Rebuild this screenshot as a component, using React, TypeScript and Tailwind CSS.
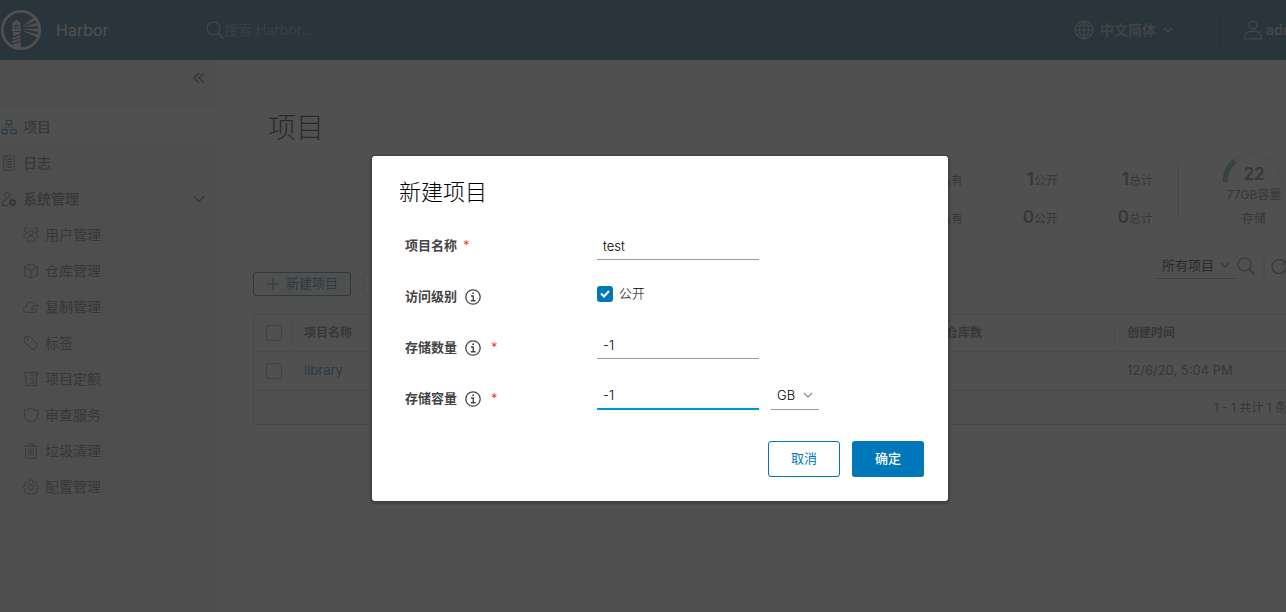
import type { ReactNode } from 'react';

const FONT = "font-['Inter','Noto_Sans_CJK_SC',sans-serif]";

function Icon({ children, className = 'size-4', box = 36, stroke = 2 }: { children: ReactNode; className?: string; box?: number; stroke?: number }) {
  return (
    <svg
      className={`shrink-0 ${className}`}
      viewBox={`0 0 ${box} ${box}`}
      fill="none"
      stroke="currentColor"
      strokeWidth={stroke}
      strokeLinejoin="round"
      aria-hidden="true"
    >
      {children}
    </svg>
  );
}

const Chevron = ({ className }: { className: string }) => (
  <Icon className={className} box={12} stroke={1.2}>
    <path d="M2 4l4 4 4-4" />
  </Icon>
);

const Magnifier = ({ className }: { className: string }) => (
  <Icon className={className} box={18} stroke={1.1}>
    <circle cx="7.5" cy="7.5" r="6.5" />
    <path d="M12.2 12.2l5 5" strokeWidth="1.5" />
  </Icon>
);

function HarborLogo() {
  return (
    <svg className="size-[42px] shrink-0" viewBox="0 0 42 42" fill="currentColor" aria-hidden="true">
      <circle cx="21" cy="21" r="18.7" fill="none" stroke="currentColor" strokeWidth="2.7" />
      <path d="M16.5 10.5l4 3.5v2h-8v-2z" />
      <path d="M12.6 16h2v5h-2zM18.4 16h2v5h-2zM15.6 17h2v3h-2zM11.8 20.6h9.4v1.6h-9.4z" />
      <path d="M13 23h7l.2 2-7.4 2.200zM12.700 28.500l7.600-2.300.1 2-7.800 2.500zM12.500 32l8-2.500.1 2-8.200 2.700zM12.300 35.500l8.400-2.700.2 6.700h-4z" />
      <path d="M22 17.500L34.500 8l2 3zM22 18.600l15.500-5 1 3.400zM22 20l17-.5v3.400zM22 21.500l16.500 4-1.500 3z" />
    </svg>
  );
}

const icons: Record<string, ReactNode> = {
  projects: (
    <>
      <path d="M12 3h12v9H12zM2 24h12v9H2zM22 24h12v9H22z" strokeWidth="2.5" />
      <path d="M18 13v4M8 22v-4h20v4" strokeWidth="1.500" />
    </>
  ),
  logs: (
    <>
      <path d="M6 2h24v32H6z" />
      <path d="M11 9h2M15 9h10M11 15h2M15 15h10M11 21h2M15 21h10M11 27h2M15 27h10" strokeWidth="3" />
    </>
  ),
  admin: (
    <>
      <circle cx="14" cy="9" r="6" />
      <path d="M16 33H3v-7c3-5 7-7 12-7" strokeWidth="2.5" />
      <circle cx="26" cy="26" r="5" strokeWidth="4" />
      <path d="M26 17v4M26 31v4M17 26h4M31 26h4M20 20l3 3M29 29l3 3M32 20l-3 3M23 29l-3 3" strokeWidth="3" />
    </>
  ),
  users: (
    <>
      <circle cx="18" cy="13" r="5" />
      <path d="M9 32v-6c2-4 5-6 9-6s7 2 9 6v6z" />
      <path d="M11 11a5 5 0 1 1 1-7M25 11a5 5 0 1 0-1-7M6 24H2v-5c1-3 4-5 7-5M30 24h4v-5c-1-3-4-5-7-5" />
    </>
  ),
  registry: (
    <>
      <path d="M18 2l15 7v18l-15 7-15-7V9z" />
      <path d="M3 9l15 8 15-8M18 17v17" />
    </>
  ),
  replication: (
    <>
      <path d="M31 24c0 4-2 6-6 6H9c-5 0-8-3-8-7s3-6 6-6c0-6 4-10 10-10 3 0 6 1 8 4" />
      <path d="M22 15h12M30 11l4 4-4 4M31 22H19M23 18l-4 4 4 4" />
    </>
  ),
  tag: (
    <>
      <path d="M3 4h13l18 18-11 12L3 16z" />
      <circle cx="10" cy="10" r="1.500" />
    </>
  ),
  quota: (
    <>
      <path d="M2 3h32v7M2 3l5 6v24h23V3" />
      <path d="M17 9h9M21 14h5M17 19h9M21 24h5M17 28h9" />
    </>
  ),
  shield: <path d="M18 2c5 4 10 5 15 5v11c0 8-6 13-15 16C9 31 3 26 3 18V7c5 0 10-1 15-5z" />,
  trash: <path d="M2 7h32M6 11v23h24V11M13 13v16M18 13v16M23 13v16M13 6V2h10v4" />,
  cog: (
    <>
      <path d="M15 2h6l1 5 3 1 4-3 4 4-3 4 1 3 5 1v4l-5 2-1 3 3 4-4 4-4-3-3 1-1 4h-6l-1-4-3-1-4 3-4-4 3-4-1-3-4-2v-4l4-1 1-3-3-4 4-4 4 3 3-1z" />
      <circle cx="18" cy="18" r="6" />
    </>
  ),
};

const subItems = [
  ['users', '用户管理'],
  ['registry', '仓库管理'],
  ['replication', '复制管理'],
  ['tag', '标签'],
  ['quota', '项目定额'],
  ['shield', '审查服务'],
  ['trash', '垃圾清理'],
  ['cog', '配置管理'],
];

function Header() {
  return (
    <header className="flex h-[60px] shrink-0 items-center bg-[#004a70] text-[#fafafa]">
      <a href="#" className="flex w-[181px] items-center gap-[14px]">
        <HarborLogo />
        <span className="text-base">Harbor</span>
      </a>
      <div className="h-10 w-px bg-white/10" />
      <label className="flex flex-1 items-center pl-6 opacity-65">
        <Magnifier className="size-[18px]" />
        <input type="search" aria-label="搜索" placeholder="搜索 Harbor..." className="w-48 bg-transparent text-sm outline-none placeholder:text-[#fafafa]/60" />
      </label>
      <button className="flex items-center gap-[6px] pr-[42px] text-sm font-medium opacity-65">
        <Icon className="size-5" stroke={2}>
          <circle cx="18" cy="18" r="16" />
          <path d="M18 2v32M2 18h32M5 10h26M5 26h26M18 2c-11 9-11 23 0 32M18 2c11 9 11 23 0 32" />
        </Icon>
        中文简体
        <Chevron className="size-3" />
      </button>
      <div className="h-10 w-px bg-white/10" />
      <button className="flex w-[103px] items-center gap-[3px] overflow-hidden pl-[26px] text-sm font-semibold opacity-65">
        <Icon className="size-5">
          <circle cx="18" cy="9" r="7" />
          <path d="M3 34v-7c4-5 9-7 15-7s11 2 15 7v7z" />
        </Icon>
        admin
      </button>
    </header>
  );
}

function Sidebar() {
  return (
    <nav className="w-[217px] shrink-0 bg-[#eeeeee] text-sm text-[#565656]">
      <div className="flex h-[37px] items-center justify-end border-b border-[#dcdcdc] pr-3">
        <button aria-label="收起">
          <Icon className="size-3" box={12} stroke={1.4}>
            <path d="M6 1L1 6l5 5M11 1L6 6l5 5" />
          </Icon>
        </button>
      </div>
      <ul className="pt-3">
        <li>
          <a href="#" className="flex h-9 items-center gap-[6px] bg-[#fafafa] pl-px font-medium">
            <Icon className="size-4 text-[#0072a3]">{icons.projects}</Icon>
            项目
          </a>
        </li>
        <li>
          <a href="#" className="flex h-9 items-center gap-[6px] pl-px font-medium">
            <Icon>{icons.logs}</Icon>
            日志
          </a>
        </li>
        <li>
          <button className="flex h-9 w-full items-center gap-[6px] pr-3 pl-px font-medium">
            <Icon>{icons.admin}</Icon>
            系统管理
            <Chevron className="ml-auto size-3 scale-125" />
          </button>
          <ul>
            {subItems.map(([icon, label]) => (
              <li key={label}>
                <a href="#" className="flex h-9 items-center gap-[6px] pl-[23px] font-normal">
                  <Icon>{icons[icon]}</Icon>
                  {label}
                </a>
              </li>
            ))}
          </ul>
        </li>
      </ul>
    </nav>
  );
}

function Stat({ value, label }: { value: number; label: string }) {
  return (
    <div className="flex w-[95px] items-baseline justify-end">
      <span className="text-[17px] leading-5 font-semibold">{value}</span>
      <span className="text-xs font-normal">{label}</span>
    </div>
  );
}

function Statistics() {
  return (
    <div className="flex h-[84px] justify-end pr-9 text-[#565656]">
      <div className="flex flex-col gap-[18px] pt-[14px]">
        <div className="flex">
          <Stat value={0} label="私有" />
          <Stat value={1} label="公开" />
          <Stat value={1} label="总计" />
        </div>
        <div className="flex">
          <Stat value={0} label="私有" />
          <Stat value={0} label="公开" />
          <Stat value={0} label="总计" />
        </div>
      </div>
      <div className="mt-2 mr-[45px] ml-6 h-[53px] w-[2px] bg-[#dddddd]" />
      <div className="relative flex w-[60px] flex-col items-center pt-[9px] text-xs font-normal whitespace-nowrap">
        <svg className="absolute -top-1 -left-[3px] w-16" viewBox="0 0 64 32" fill="none" strokeWidth="5" aria-hidden="true">
          <path d="M4 31a28 28 0 0 1 56 0" stroke="#f2f2f2" />
          <path d="M4 31a28 28 0 0 1 9.500-21" stroke="#5aa66e" />
        </svg>
        <span className="text-[17px] leading-5 font-semibold">22</span>
        <span className="leading-[22px]">77GB容量</span>
        <span className="leading-[26px]">存储</span>
      </div>
    </div>
  );
}

function Toolbar() {
  return (
    <div className="flex h-11 justify-between">
      <div className="flex items-end gap-3 text-[13px]">
        <button className="flex h-6 items-center gap-[6px] rounded-[3px] border border-[#0072a3] px-3 text-[#0072a3]">
          <Icon className="size-[14px]" box={14} stroke={1}>
            <path d="M7 1v12M1 7h12" />
          </Icon>
          新建项目
        </button>
        <button disabled className="h-6 rounded-[3px] border border-[#cccccc] px-3 text-[#cccccc]">
          删除
        </button>
      </div>
      <div className="flex items-start text-[#565656]">
        <div className="relative border-b border-[#9a9a9a]">
          <select aria-label="项目筛选" className="h-6 w-20 appearance-none bg-transparent pl-[6px] text-[13px] text-black outline-none">
            <option>所有项目</option>
          </select>
          <Chevron className="pointer-events-none absolute top-[7px] right-[5px] size-3" />
        </div>
        <button aria-label="搜索" className="mt-[5px] ml-px">
          <Magnifier className="size-[18px]" />
        </button>
        <div className="mt-1 ml-2 h-[23px] w-[2px] bg-[#dddddd]" />
        <button aria-label="刷新" className="mt-[6px] mr-[33px] ml-[6px]">
          <Icon className="size-4" box={16} stroke={1.2}>
            <path d="M14 5a7 7 0 1 0 1 4" />
            <path d="M15 1v5h-5" />
          </Icon>
        </button>
      </div>
    </div>
  );
}

function ProjectTable() {
  const box = 'block size-4 appearance-none rounded-[3px] border border-[#9a9a9a]';
  return (
    <div className="mt-[18px] rounded-[3px] border border-[#cccccc] text-[13px] text-[#565656]">
      <table className="w-full table-fixed text-left">
        <colgroup>
          <col className="w-[38px]" />
          <col />
          <col className="w-[180px]" />
          <col className="w-[205px]" />
        </colgroup>
        <thead className="text-xs">
          <tr className="h-9">
            <th className="pl-3">
              <input type="checkbox" aria-label="全选" className={box} />
            </th>
            <th className="font-semibold">
              <div className="flex h-6 items-center border-l border-[#dddddd] pl-[11px]">项目名称</div>
            </th>
            <th className="font-semibold">
              <div className="flex h-6 items-center pl-3">仓库数</div>
            </th>
            <th className="font-semibold">
              <div className="flex h-6 items-center border-l border-[#dddddd] pl-3">创建时间</div>
            </th>
          </tr>
        </thead>
        <tbody>
          <tr className="h-[39px] border-t border-[#dddddd]">
            <td className="pl-3">
              <input type="checkbox" aria-label="library" className={box} />
            </td>
            <td className="pl-3">
              <a href="#" className="text-[#0072a3]">library</a>
            </td>
            <td />
            <td className="pl-[13px]">12/6/20, 5:04 PM</td>
          </tr>
        </tbody>
      </table>
      <div className="flex h-[34px] items-center justify-end border-t border-[#cccccc] pr-2 text-xs font-normal">1 - 1 共计 1 条记录</div>
    </div>
  );
}

const InfoIcon = () => (
  <Icon className="ml-2 size-4 text-[#454545]" box={16} stroke={1.3}>
    <circle cx="8" cy="8" r="7.200" />
    <path d="M7.300 4.200h1.700M6 7h2.300v4.500M5.800 11.700h4.800" strokeWidth="1.400" />
  </Icon>
);

function Field({ id, label, info, required, children }: { id: string; label: string; info?: boolean; required?: boolean; children: ReactNode }) {
  return (
    <div className="flex h-[51px] pl-[33px]">
      <label htmlFor={id} className="flex w-48 items-center text-[13px] font-semibold text-[#454545]">
        {label}
        {info && <InfoIcon />}
        {required && <span className={info ? 'ml-[10px] font-light text-[#e62700]' : 'ml-[6px] font-light text-[#e62700]'}>*</span>}
      </label>
      {children}
    </div>
  );
}

function NewProjectDialog() {
  const input = 'h-7 w-[162px] border-b border-[#9a9a9a] bg-transparent px-[6px] text-[13px] font-light text-black outline-none';
  return (
    <div role="dialog" aria-modal="true" aria-labelledby="dialog-title" className="w-[576px] rounded-[3px] bg-white pb-6 text-[#313131] shadow-[0_1px_2px_2px_rgba(0,0,0,0.2)]">
      <h2 id="dialog-title" className="flex h-16 items-center pt-2 pl-[27px] text-[22px] font-light text-black">
        新建项目
      </h2>
      <form>
        <Field id="name" label="项目名称" required>
          <div className="pt-3">
            <input id="name" defaultValue="test" className={input} />
          </div>
        </Field>
        <Field id="public" label="访问级别" info>
          <div className="flex h-[46px] items-center gap-[6px]">
            <span className="relative">
              <input id="public" type="checkbox" defaultChecked className="block size-4 appearance-none rounded-[3px] bg-[#0077b8]" />
              <svg className="pointer-events-none absolute inset-0 size-4" viewBox="0 0 16 16" fill="none" stroke="white" strokeWidth="2" aria-hidden="true">
                <path d="M4 7.500l3 3 5-5.500" />
              </svg>
            </span>
            <label htmlFor="public" className="text-[13px] font-light text-black">
              公开
            </label>
          </div>
        </Field>
        <Field id="count" label="存储数量" info required>
          <div className="pt-[9px]">
            <input id="count" defaultValue="-1" className={input} />
          </div>
        </Field>
        <Field id="capacity" label="存储容量" info required>
          <div className="flex items-start gap-3 pt-[9px]">
            <input id="capacity" defaultValue="-1" className="h-7 w-[162px] border-b-2 border-[#0095d3] bg-transparent px-[6px] text-[13px] font-light text-black outline-none" />
            <div className="relative border-b border-[#9a9a9a]">
              <select aria-label="单位" className="h-[26px] w-12 appearance-none bg-transparent pl-[6px] text-[13px] font-light text-black outline-none">
                <option>GB</option>
              </select>
              <Chevron className="pointer-events-none absolute top-[7px] right-[5px] size-3 text-[#8c8c8c]" />
            </div>
          </div>
        </Field>
        <div className="mt-[17px] flex justify-end gap-3 pr-6 text-[13px]">
          <button type="button" className="h-9 w-[72px] rounded-[3px] border border-[#0077b8] text-[#0077b8]">
            取消
          </button>
          <button type="button" className="h-9 w-[72px] rounded-[3px] bg-[#0077b8] font-medium text-white">
            确定
          </button>
        </div>
      </form>
    </div>
  );
}

export default function App() {
  return (
    <div className={`overflow-hidden ${FONT}`}>
      <div className="relative -mr-[34px] flex min-h-screen flex-col">
        <Header />
        <div className="flex flex-1">
          <Sidebar />
          <main className="min-w-0 flex-1 bg-[#fafafa] pl-9">
            <h1 className="pt-[49px] pl-[15px] text-[28px] leading-[38px] font-light text-black">项目</h1>
            <div className="pt-2">
              <Statistics />
            </div>
            <div className="pt-[13px]">
              <Toolbar />
            </div>
            <ProjectTable />
          </main>
        </div>
        <div className="absolute inset-0 flex items-start justify-center bg-[#313131]/85 pt-[156px]">
          <NewProjectDialog />
        </div>
      </div>
    </div>
  );
}
